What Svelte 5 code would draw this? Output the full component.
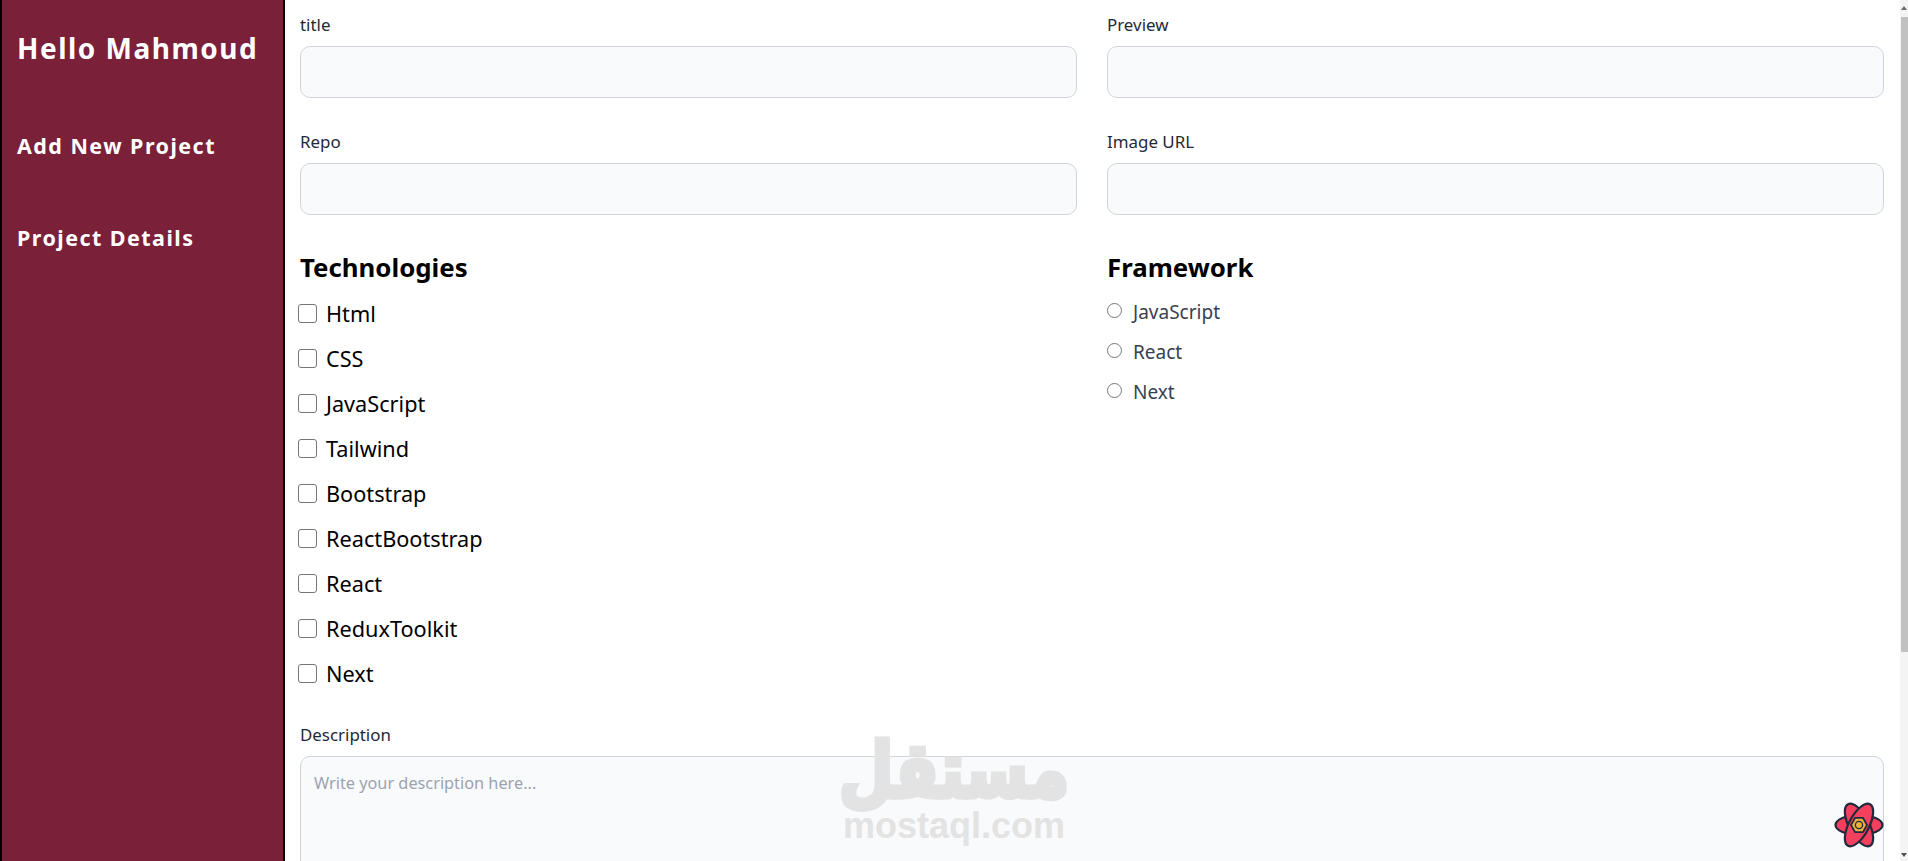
<script>
  const techs = ['Html','CSS','JavaScript','Tailwind','Bootstrap','ReactBootstrap','React','ReduxToolkit','Next'];
  const frameworks = ['JavaScript','React','Next'];
</script>

<div class="page">
  <aside class="sidebar">
    <h1>Hello Mahmoud</h1>
    <a href="#add" class="first">Add New Project</a>
    <a href="#details">Project Details</a>
  </aside>
  <main class="content">
    <div class="grid fields">
      <label class="field"><span>title</span><input type="text" /></label>
      <label class="field"><span>Preview</span><input type="text" /></label>
      <label class="field"><span>Repo</span><input type="text" /></label>
      <label class="field"><span>Image URL</span><input type="text" /></label>
    </div>
    <div class="grid choices">
      <section>
        <h2>Technologies</h2>
        <div class="checks">
          {#each techs as t}
            <label class="check"><input type="checkbox" /><span>{t}</span></label>
          {/each}
        </div>
      </section>
      <section>
        <h2>Framework</h2>
        <div class="radios">
          {#each frameworks as f}
            <label class="radio"><input type="radio" name="fw" /><span>{f}</span></label>
          {/each}
        </div>
      </section>
    </div>
    <label class="field desc"><span>Description</span><textarea placeholder="Write your description here..."></textarea></label>
  </main>
  <div class="scrollbar"><div class="arrow up"></div><div class="thumb"></div><div class="spacer"></div><div class="arrow down"></div></div>

  <div class="watermark" aria-label="mostaql">
    <div class="ar" dir="rtl" lang="ar">مستقل</div>
    <div class="en">mostaql.com</div>
  </div>
  <svg class="atom" viewBox="0 0 50 46" aria-hidden="true">
    <g fill="#f43f5e" stroke="#1f2a3c" stroke-width="2.2">
      <ellipse cx="25" cy="23" rx="23.5" ry="10" />
      <ellipse cx="25" cy="23" rx="23.5" ry="10" transform="rotate(62 25 23)" />
      <ellipse cx="25" cy="23" rx="23.5" ry="10" transform="rotate(-62 25 23)" />
    </g>
    <polygon points="16,23 20.5,15 29.5,15 34,23 29.5,31 20.5,31" fill="#1f2a3c" />
    <polygon points="18,23 21.6,16.8 28.4,16.8 32,23 28.4,29.2 21.6,29.2" fill="#eab03a" />
    <circle cx="25" cy="23" r="3.6" fill="none" stroke="#1f2a3c" stroke-width="1.3" />
  </svg>
</div>

<style>
  :global(body) { margin: 0; background: #fff; }
  .page {
    position: relative;
    display: flex;
    width: 1908px;
    height: 861px;
    overflow: hidden;
    font-family: "Noto Sans", "Liberation Sans", sans-serif;
    color: #1f2937;
  }
  .sidebar {
    box-sizing: border-box;
    flex: 0 0 285px;
    background: #7a2038;
    border-left: 2px solid #000;
    border-right: 2px solid #000;
    padding: 29px 0 0 15px;
    color: #fff;
  }
  .sidebar h1 {
    margin: 0 0 65px;
    font-size: 28px;
    line-height: 38px;
    letter-spacing: 1.5px;
    font-weight: 700;
  }
  .sidebar a {
    display: block;
    color: #fff;
    text-decoration: none;
    font-size: 21.5px;
    line-height: 28px;
    font-weight: 700;
    letter-spacing: 1.45px;
    margin-bottom: 64px;
  }
  .content {
    box-sizing: border-box;
    flex: 1;
    min-width: 0;
    padding: 14px 16px 0 15px;
  }
  .grid {
    display: grid;
    grid-template-columns: 777px 777px;
    column-gap: 30px;
  }
  .fields { row-gap: 33px; }
  .field { display: block; }
  .field span {
    display: block;
    font-size: 16.9px;
    line-height: 22px;
    margin-bottom: 10px;
    font-weight: 400;
  }
  .field input, .field textarea {
    display: block;
    box-sizing: border-box;
    width: 100%;
    height: 52px;
    background: #f9fafb;
    border: 1px solid #d1d5db;
    border-radius: 10px;
    outline: none;
    font: inherit;
  }
  .choices { margin-top: 35px; }
  h2 {
    margin: 0;
    font-size: 25.8px;
    line-height: 34px;
    font-weight: 700;
    color: #000;
  }
  .checks { margin-top: 14px; display: flex; flex-direction: column; gap: 15px; }
  .check {
    display: flex;
    align-items: center;
    height: 30px;
    font-size: 21.7px;
    color: #000;
  }
  .check input {
    appearance: none;
    box-sizing: border-box;
    width: 19px;
    height: 19px;
    margin: 0 9px 0 -2px;
    background: #fff;
    border: 1.5px solid #767676;
    border-radius: 3px;
  }
  .radios { margin-top: 16px; display: flex; flex-direction: column; gap: 16px; }
  .radio {
    display: flex;
    align-items: center;
    height: 24px;
    font-size: 19px;
    color: #374151;
  }
  .radio input {
    appearance: none;
    box-sizing: border-box;
    width: 15px;
    height: 15px;
    margin: -3px 11px 0 0;
    background: #fff;
    border: 1px solid #767676;
    border-radius: 50%;
  }
  .desc { margin-top: 36px; }
  .desc textarea {
    height: 200px;
    padding: 14px 13px;
    resize: none;
    font-size: 16.3px;
    line-height: 24px;
  }
  .desc textarea::placeholder { color: #9ca3af; opacity: 1; }
  .scrollbar {
    flex: 0 0 8px;
    background: #f4f4f4;
    display: flex;
    flex-direction: column;
  }
  .thumb { height: 635px; flex: none; background: #c1c1c1; margin-left: 1px; }
  .spacer { flex: 1; }
  .arrow { height: 17px; flex: none; position: relative; }
  .arrow::after {
    content: "";
    position: absolute;
    left: 1px;
    border-left: 3px solid transparent;
    border-right: 3px solid transparent;
  }
  .arrow.up::after { top: 6px; border-bottom: 4px solid #6b6b6b; }
  .arrow.down::after { bottom: 4px; border-top: 4px solid #505050; }
  .watermark {
    position: absolute;
    left: 841px;
    top: 733px;
    width: 226px;
    text-align: center;
    color: #e3e3e3;
    font-weight: 700;
    pointer-events: none;
  }
  .ar {
    font-family: "DejaVu Sans", sans-serif;
    font-size: 60px;
    line-height: 80px;
    -webkit-text-stroke: 4px #e3e3e3;
    transform: translateY(-3px) scale(1.05, 1.28);
  }
  .en {
    font-family: "Liberation Sans", sans-serif;
    font-size: 36px;
    line-height: 36px;
    margin-top: -5px;
  }
  .atom {
    position: absolute;
    left: 1834px;
    top: 802px;
    width: 50px;
    height: 46px;
  }
</style>
